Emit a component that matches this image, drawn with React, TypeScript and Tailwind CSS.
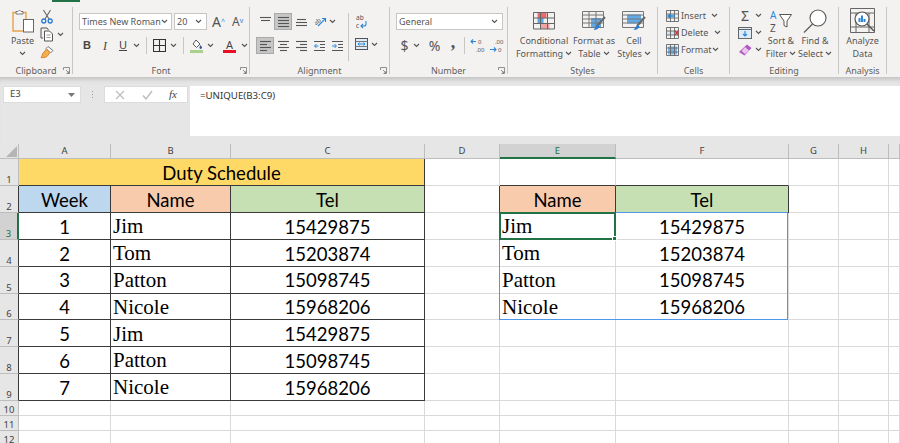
import type { ReactNode } from "react";

const Chev = ({ className = "" }: { className?: string }) => (
  <svg width="7" height="5" viewBox="0 0 7 5" className={`shrink-0 ${className}`} fill="none" stroke="#555" strokeWidth="1.1">
    <path d="M1 1l2.5 2.5L6 1" />
  </svg>
);

const Launcher = () => (
  <svg width="7" height="7" viewBox="0 0 7 7" className="absolute right-[2px] top-[1px]" fill="none" stroke="#777" strokeWidth="0.8">
    <path d="M.5 3V.5h6v6H3.500M3 3l3 3M4 6h2V4" />
  </svg>
);

function Group({ label, width, launcher, children }: { label: string; width: string; launcher?: boolean; children: ReactNode }) {
  return (
    <section className={`flex h-[67px] shrink-0 flex-col border-r border-[#c8c6c4] ${width}`}>
      <div className="h-[59px]">{children}</div>
      <div className="relative h-[8px] text-center text-[9px] leading-[10px] text-[#605e5c]">
        {label}
        {launcher && <Launcher />}
      </div>
    </section>
  );
}

// horizontal-lines icon used by the alignment buttons
const Lines = ({ rows }: { rows: [number, number][] }) => (
  <svg width="13" height="12" viewBox="0 0 13 12" stroke="#555" strokeWidth="1.1">
    {rows.map(([a, b], i) => (
      <path key={i} d={`M${a} ${1.5 + i * 3}H${b}`} />
    ))}
  </svg>
);

const Indent = ({ flip }: { flip?: boolean }) => (
  <svg width="13" height="12" viewBox="0 0 13 12" fill="none">
    <path d="M1 1.5h11M7 4.5h5M7 7.5h5M1 10.5h11" stroke="#555" />
    <path d={flip ? "M1 6h4M3.5 4l2 2-2 2" : "M5.5 6h-4M3.5 4l-2 2 2 2"} stroke="#2b88d8" />
  </svg>
);

const Btn = ({ on, children }: { on?: boolean; children: ReactNode }) => (
  <div className={`flex h-[17px] w-[18px] items-center justify-center ${on ? "border border-[#a9a9a9] bg-[#c6c6c6]" : ""}`}>{children}</div>
);

const Paste = () => (
  <svg width="24" height="24" viewBox="0 0 24 24" fill="none">
    <path d="M5 3.5H2V22h11" stroke="#e8a24c" strokeWidth="1.4" />
    <path d="M12 3.5h3V10" stroke="#e8a24c" strokeWidth="1.4" />
    <path d="M5 5V2.5h2L8.5 1 10 2.5h2V5z" stroke="#777" fill="#fff" />
    <rect x="12.5" y="10.5" width="10" height="12.5" fill="#fff" stroke="#666" />
  </svg>
);

const Scissors = () => (
  <svg width="14" height="15" viewBox="0 0 14 15" fill="none">
    <path d="M3.5 1l5.500 9M10.500 1L5 10" stroke="#666" strokeWidth="1.1" />
    <circle cx="3.8" cy="12" r="2" stroke="#2b7cd3" strokeWidth="1.3" />
    <circle cx="10.2" cy="12" r="2" stroke="#2b7cd3" strokeWidth="1.3" />
  </svg>
);

const Copy = () => (
  <svg width="14" height="15" viewBox="0 0 14 15" fill="none" stroke="#555">
    <path d="M3 11H1V1h6l1.500 2" />
    <path d="M4.500 4h5l3 3v7h-8z" fill="#fff" />
    <path d="M6.500 8h4M6.500 10.500h4" stroke="#999" />
  </svg>
);

const Brush = () => (
  <svg width="15" height="14" viewBox="0 0 15 14" fill="none">
    <path d="M8 1.500l5 4-2.500 2.500-4.500-4.500z" fill="#fff" stroke="#777" />
    <path d="M6.500 4L10 7.500 7 11.500c-2 1-4 1.500-6 1 1-1 1-2 1.500-3.500z" fill="#f2b04e" stroke="#d9822b" />
  </svg>
);

const Borders = () => (
  <svg width="13" height="13" viewBox="0 0 13 13" fill="none" stroke="#333" strokeWidth="1.1">
    <path d="M.5.500h12v12H.5zM6.500.500v12M.5 6.500h12" />
  </svg>
);

const FillColor = () => (
  <svg width="13" height="14" viewBox="0 0 13 14">
    <path d="M6 1l4 4-3.500 3.500L3 5z" fill="#fff" stroke="#555" />
    <path d="M10.500 6c1 1.400 1.500 2 1.500 2.600a1.300 1.300 0 01-2.600 0c0-.6.500-1.200 1.100-2.600z" fill="#2b579a" />
    <rect x="0" y="11" width="13" height="3" fill="#a9d18e" />
  </svg>
);

const Orient = () => (
  <svg width="15" height="14" viewBox="0 0 15 14" fill="none">
    <text x="2" y="9" fontSize="6" fill="#555" transform="rotate(-40 5 7)">ab</text>
    <path d="M6 11L13 4M10 3.500h3.500V7" stroke="#2b88d8" strokeWidth="1.1" />
  </svg>
);

const Wrap = () => (
  <svg width="13" height="16" viewBox="0 0 13 16" fill="none">
    <text x="1" y="6" fontSize="6.500" fill="#555">ab</text>
    <text x="1" y="14" fontSize="6.500" fill="#555">c</text>
    <path d="M11 7v3a2 2 0 01-2 2H6M8 10l-2 2 2 2" stroke="#2b88d8" strokeWidth="1.1" />
  </svg>
);

const Merge = () => (
  <svg width="13" height="12" viewBox="0 0 13 12" fill="none">
    <rect x=".5" y=".5" width="12" height="11" stroke="#555" fill="#deecf9" />
    <path d="M.5 3.500h12M.5 8.500h12" stroke="#777" />
    <path d="M3 6h7M4.500 4.500L3 6l1.500 1.500M8.500 4.500L10 6 8.500 7.500" stroke="#2b88d8" />
  </svg>
);

const Decimal = ({ more }: { more?: boolean }) => (
  <svg width="15" height="15" viewBox="0 0 15 15" fill="none">
    <text x={more ? 8 : 6} y="6" fontSize="6" fill="#555">{more ? "0" : ".00"}</text>
    <text x={more ? 6 : 9} y="14" fontSize="6" fill="#555">{more ? ".00" : "0"}</text>
    <path d={more ? "M6 3.500H1M3 1.500l-2 2 2 2" : "M1 11.500h6M5 9.500l2 2-2 2"} stroke="#2b88d8" strokeWidth="1.1" />
  </svg>
);

const CondFormat = () => (
  <svg width="22" height="18" viewBox="0 0 22 18" fill="none">
    <rect x="4.500" y=".5" width="9" height="5.500" fill="#ef6a6a" />
    <rect x="4.500" y="6" width="6" height="5.500" fill="#5ea6e6" />
    <rect x="7.500" y="11.500" width="9" height="5.500" fill="#f4a3a3" />
    <path d="M.5.500h21v16.500H.5zM.5 6h21M.5 11.500h21M7.500.500v16.500M14.500.500v16.500" stroke="#666" />
  </svg>
);

const TableBrush = ({ cell }: { cell?: boolean }) => (
  <svg width="24" height="20" viewBox="0 0 24 20" fill="none">
    {cell ? <rect x="5" y="3.500" width="14" height="9" fill="#62a9e8" /> : <rect x="9" y="7" width="10" height="9" fill="#62a9e8" />}
    <path d="M.5.500h21v16H.5zM.5 4h21M.5 8h21M.5 12h21" stroke="#777" />
    {!cell && <path d="M7 .5v16M14 .5v16" stroke="#777" />}
    <path d="M23 6l-8 9" stroke="#666" strokeWidth="2" />
    <path d="M15.500 13.500l2 2c-1 2.500-3 3.500-6 3.500 1.500-1.500 2-3 4-5.500z" fill="#2b7cd3" />
  </svg>
);

const CellIcon = ({ kind }: { kind: "insert" | "delete" | "format" }) => (
  <svg width="13" height="12" viewBox="0 0 13 12" fill="none" className="shrink-0">
    {kind === "format" ? <rect x="2" y="2.500" width="9" height="8" fill="#7db7ea" /> : <rect x="1" y="4" width="8" height="4" fill="#cfe4f7" />}
    <path d="M.5.500h12v11H.5zM.5 4h12M.5 8h12M4.500.500v11M8.500.500v11" stroke="#666" strokeWidth=".9" />
    {kind === "insert" && <path d="M9 6H2M4.500 4L2 6l2.500 2" stroke="#2b88d8" strokeWidth="1.3" />}
    {kind === "delete" && <path d="M9 4l3.500 4M12.500 4L9 8" stroke="#d13438" strokeWidth="1.3" />}
  </svg>
);

const SortFilter = () => (
  <svg width="24" height="26" viewBox="0 0 24 26" fill="none" className="-mb-[2px]">
    <text x="1" y="10" fontSize="10" fill="#2b88d8">A</text>
    <text x="1" y="22.500" fontSize="10" fill="#555">Z</text>
    <path d="M10.500 5.500h12l-4.500 6.500v6l-3-1.500V12z" stroke="#555" fill="#fff" />
  </svg>
);

const Magnifier = () => (
  <svg width="24" height="24" viewBox="0 0 24 24" fill="none" stroke="#555" strokeWidth="1.1">
    <circle cx="15" cy="9" r="8" fill="#fff" />
    <path d="M9.500 15L1 23.500" />
  </svg>
);

const Analyze = () => (
  <svg width="25" height="25" viewBox="0 0 25 25" fill="none">
    <path d="M.5.500h24v24H.5zM.5 5h24M.5 19h24M6 5v19M19 5v19" stroke="#666" />
    <circle cx="12" cy="11" r="7" fill="#fff" stroke="#555" strokeWidth="1.2" />
    <path d="M8.500 14V10h2v4zM11 14V7.500h2V14zM13.500 14v-3h2v3z" fill="#2b88d8" />
    <path d="M17 16l7 7" stroke="#555" strokeWidth="1.5" />
  </svg>
);

const Ribbon = () => (
  <header className="flex h-[77px] bg-[#f3f2f1] pt-[7px] text-[#555]">
    <Group label="Clipboard" width="w-[73px]" launcher>
      <div className="flex pl-[10px] pt-[2px]">
        <div className="flex w-[25px] flex-col items-center">
          <Paste />
          <span className="mt-[2px] text-[9px] leading-[12px]">Paste</span>
          <Chev className="mt-[4px]" />
        </div>
        <div className="ml-[5px] flex flex-col gap-[3px]">
          <Scissors />
          <div className="flex items-center gap-[3px]"><Copy /><Chev /></div>
          <Brush />
        </div>
      </div>
    </Group>

    <Group label="Font" width="w-[177px]" launcher>
      <div className="flex items-center pl-[6px] pt-[6px]">
        <div className="flex h-[17px] w-[93px] items-center justify-between whitespace-nowrap border border-[#c8c6c4] bg-white pl-[2px] pr-[4px] text-[9px]">Times New Roman<Chev /></div>
        <div className="ml-[2px] flex h-[17px] w-[33px] items-center justify-between border border-[#c8c6c4] bg-white pl-[2px] pr-[4px] text-[9px]">20<Chev /></div>
        <span className="ml-[5px] w-[15px] whitespace-nowrap text-[14px] leading-[17px]">A<sup className="text-[7px] text-[#2b88d8]">^</sup></span>
        <span className="ml-[5px] w-[13px] whitespace-nowrap text-[12px] leading-[17px]">A<sup className="text-[7px] text-[#2b88d8]">v</sup></span>
      </div>
      <div className="mt-[7px] flex h-[17px] items-center pl-[5px] text-[#444]">
        <span className="w-[18px] text-center font-['Liberation_Sans',sans-serif] text-[11px] font-bold">B</span>
        <span className="w-[18px] text-center font-['Liberation_Serif',serif] text-[12px] italic">I</span>
        <span className="w-[18px] text-center text-[11px] underline">U</span>
        <Chev className="ml-[1px]" />
        <div className="mx-[6px] h-[17px] w-px bg-[#c8c6c4]" />
        <Borders />
        <Chev className="ml-[4px]" />
        <div className="mx-[6px] h-[17px] w-px bg-[#c8c6c4]" />
        <FillColor />
        <Chev className="ml-[4px]" />
        <div className="ml-[9px] flex w-[13px] flex-col items-center">
          <span className="text-[11px] leading-[11px]">A</span>
          <div className="h-[3px] w-[13px] bg-[#e81123]" />
        </div>
        <Chev className="ml-[5px]" />
      </div>
    </Group>

    <Group label="Alignment" width="w-[140px]" launcher>
      <div className="flex">
        <div>
          <div className="flex items-center pl-[6px] pt-[6px]">
            <Btn><Lines rows={[[1, 12], [2, 11]]} /></Btn>
            <Btn on><Lines rows={[[1, 12], [1, 12], [1, 12], [1, 12]]} /></Btn>
            <Btn><div className="pt-[4px]"><Lines rows={[[2, 11], [1, 12], [1, 12]]} /></div></Btn>
            <Btn><Orient /></Btn>
            <Chev className="ml-[1px]" />
          </div>
          <div className="mt-[7px] flex items-center pl-[6px]">
            <Btn on><Lines rows={[[1, 12], [1, 8], [1, 12], [1, 8]]} /></Btn>
            <Btn><Lines rows={[[1, 12], [3, 10], [1, 12], [3, 10]]} /></Btn>
            <Btn><Lines rows={[[1, 12], [5, 12], [1, 12], [5, 12]]} /></Btn>
            <Btn><Indent /></Btn>
            <Btn><Indent flip /></Btn>
          </div>
        </div>
        <div className="ml-[2px] mt-[6px] h-[48px] w-px bg-[#c8c6c4]" />
        <div className="ml-[6px] pt-[7px]">
          <Wrap />
          <div className="mt-[8px] flex items-center gap-[3px]"><Merge /><Chev /></div>
        </div>
      </div>
    </Group>

    <Group label="Number" width="w-[118px]" launcher>
      <div className="pl-[6px] pt-[6px]">
        <div className="flex h-[17px] w-[107px] items-center justify-between border border-[#c8c6c4] bg-white pl-[2px] pr-[4px] text-[9px]">General<Chev /></div>
      </div>
      <div className="mt-[7px] flex h-[17px] items-center pl-[10px]">
        <span className="w-[9px] text-center text-[14px] leading-[17px]">$</span>
        <Chev className="ml-[4px]" />
        <span className="ml-[7px] w-[15px] text-center text-[14px] leading-[17px]">%</span>
        <span className="ml-[7px] h-[17px] w-[8px] text-center font-['Liberation_Serif',serif] text-[18px] font-bold leading-[10px]">,</span>
        <div className="ml-[7px] h-[17px] w-px bg-[#c8c6c4]" />
        <div className="ml-[5px]"><Decimal more /></div>
        <div className="ml-[4px]"><Decimal /></div>
      </div>
    </Group>

    <Group label="Styles" width="w-[150px]">
      <div className="flex pl-[6px] pt-[5px] text-center text-[9px] leading-[13px]">
        <div className="flex w-[60px] flex-col items-center">
          <div className="flex h-[18px] items-center"><CondFormat /></div>
          <span className="mt-[4px]">Conditional</span>
          <span className="flex items-center gap-[2px]">Formatting <Chev /></span>
        </div>
        <div className="flex w-[40px] flex-col items-center">
          <div className="flex h-[18px] items-center"><TableBrush /></div>
          <span className="mt-[4px] whitespace-nowrap">Format as</span>
          <span className="flex items-center gap-[2px]">Table <Chev /></span>
        </div>
        <div className="flex w-[40px] flex-col items-center">
          <div className="flex h-[18px] items-center"><TableBrush cell /></div>
          <span className="mt-[4px]">Cell</span>
          <span className="flex items-center gap-[2px]">Styles <Chev /></span>
        </div>
      </div>
    </Group>

    <Group label="Cells" width="w-[72px]">
      <div className="flex flex-col pl-[8px] text-[9px]">
        <div className="flex h-[17px] items-center"><CellIcon kind="insert" /><span className="ml-[2px] w-[30px]">Insert</span><Chev /></div>
        <div className="flex h-[17px] items-center"><CellIcon kind="delete" /><span className="ml-[2px] w-[33px]">Delete</span><Chev /></div>
        <div className="flex h-[17px] items-center"><CellIcon kind="format" /><span className="ml-[2px] w-[31px]">Format</span><Chev /></div>
      </div>
    </Group>

    <Group label="Editing" width="w-[109px]">
      <div className="flex">
        <div className="flex w-[34px] flex-col pl-[8px]">
          <div className="flex h-[17px] items-center gap-[3px]"><span className="w-[14px] text-center text-[14px] leading-[17px]">Σ</span><Chev /></div>
          <div className="flex h-[17px] items-center gap-[3px]">
            <svg width="14" height="12" viewBox="0 0 14 12" fill="none"><rect x=".5" y=".5" width="13" height="11" fill="#deecf9" stroke="#666" /><path d="M.5 2.500h13" stroke="#666" /><path d="M7 4v5M5 7l2 2 2-2" stroke="#2b88d8" strokeWidth="1.2" /></svg>
            <Chev />
          </div>
          <div className="flex h-[17px] items-center gap-[3px]">
            <svg width="14" height="12" viewBox="0 0 14 12"><path d="M9 .5l4.500 3.500-7 7.500L1 8z" fill="#b455c6" /><path d="M7 3l4 3.500-4 3.500L3.500 7z" fill="#e9c6ef" /></svg>
            <Chev />
          </div>
        </div>
        <div className="flex w-[34px] flex-col items-center pt-[2px] text-[9px] leading-[13px]">
          <SortFilter />
          <span className="mt-px whitespace-nowrap">Sort &amp;</span>
          <span className="flex items-center gap-[2px]">Filter <Chev /></span>
        </div>
        <div className="flex w-[34px] flex-col items-center pt-[2px] text-[9px] leading-[13px]">
          <Magnifier />
          <span className="mt-px whitespace-nowrap">Find &amp;</span>
          <span className="flex items-center gap-[2px]">Select <Chev /></span>
        </div>
      </div>
    </Group>

    <Group label="Analysis" width="w-[48px]">
      <div className="flex flex-col items-center pt-px text-center text-[9px] leading-[13px]">
        <Analyze />
        <span className="mt-px">Analyze</span>
        <span>Data</span>
      </div>
    </Group>
  </header>
);

const FormulaBar = () => (
  <div className="flex h-[67px] bg-[#e6e6e6] shadow-[inset_0_6px_5px_-4px_#bdbdbd]">
    <div className="flex pt-[9px]">
      <div className="ml-[3px] flex h-[17px] w-[78px] items-center justify-between border border-[#dcdcdc] bg-white pl-[6px] pr-[5px] text-[9.5px] text-[#444]">
        E3
        <svg width="7" height="4" viewBox="0 0 7 4"><path d="M0 0h7L3.500 4z" fill="#777" /></svg>
      </div>
      <div className="ml-[10px] flex h-[17px] w-[3px] flex-col items-center justify-center gap-[2px]">
        <i className="size-px bg-[#999]" /><i className="size-px bg-[#999]" /><i className="size-px bg-[#999]" />
      </div>
      <div className="ml-[10px] flex h-[17px] w-[84px] items-center border border-[#dcdcdc] bg-white">
        <svg width="10" height="10" viewBox="0 0 10 10" className="ml-[10px]" fill="none" stroke="#bdbdbd" strokeWidth="1.2"><path d="M1 1l8 8M9 1L1 9" /></svg>
        <svg width="11" height="10" viewBox="0 0 11 10" className="ml-[17px]" fill="none" stroke="#bdbdbd" strokeWidth="1.4"><path d="M1 5.500L4 9l6-8" /></svg>
        <span className="ml-[16px] font-['Liberation_Serif',serif] text-[11px] italic text-[#444]">fx</span>
      </div>
    </div>
    <div className="ml-[2px] mt-[9px] h-[50px] flex-1 bg-white pl-[10px] pt-[1px] text-[9.7px] leading-[17px] text-[#333]">=UNIQUE(B3:C9)</div>
  </div>
);

const sans = "font-['Lato',sans-serif] text-[18.5px] text-black pt-[3px]";
const serif = "font-['Liberation_Serif',serif] text-[21px] text-black pl-[2px] pt-[2px]";
const thin = "border-b border-r border-[#d9d9d9]";
const dark = "border-b border-r border-[#3a3a3a]";
const centre = "flex items-center justify-center";
const left = "flex items-center";

const schedule = [
  ["1", "Jim", "15429875"],
  ["2", "Tom", "15203874"],
  ["3", "Patton", "15098745"],
  ["4", "Nicole", "15968206"],
  ["5", "Jim", "15429875"],
  ["6", "Patton", "15098745"],
  ["7", "Nicole", "15968206"],
];
const unique = schedule.slice(0, 4);
const columns = ["A", "B", "C", "D", "E", "F", "G", "H", ""];

const Empty = ({ className = thin }: { className?: string }) => <div className={className} />;

const RowHead = ({ n, on, edge }: { n: number; on?: boolean; edge?: boolean }) => (
  <div className={`flex items-end justify-center border-b border-[#bdbdbd] text-[9.5px] leading-[11px] ${on ? "border-r-2 border-r-[#217346] bg-[#d2d2d2] text-[#217346]" : `border-r bg-[#e6e6e6] text-[#444] ${edge ? "border-r-[#3a3a3a]" : "border-r-[#bdbdbd]"}`}`}>
    {n}
  </div>
);

const Sheet = () => (
  <div className="grid grid-cols-[19px_92px_120px_194px_75px_116px_173px_50px_50px_11px] grid-rows-[15px_27.4px_26.8px_26.8px_26.8px_26.8px_26.8px_26.8px_26.8px_26.8px_15px_15px_15px] font-['Noto_Sans',sans-serif]">
    <div className="flex items-end justify-end border-b border-r border-[#bdbdbd] bg-[#e6e6e6] p-[1px]">
      <div className="size-0 border-b-[11px] border-l-[11px] border-b-[#b5b5b5] border-l-transparent" />
    </div>
    {columns.map((c) => (
      <div
        key={c}
        className={`flex items-center justify-center pt-px text-[9.5px] ${c === "E" ? "border-b-2 border-r border-b-[#217346] border-r-[#bdbdbd] bg-[#d2d2d2] text-[#217346]" : "border-b border-r border-[#bdbdbd] bg-[#e6e6e6] text-[#444]"}`}
      >
        {c}
      </div>
    ))}

    <RowHead n={1} />
    <div className={`col-span-3 bg-[#ffd966] ${dark} ${centre} ${sans}`}>Duty Schedule</div>
    <Empty />
    <Empty className="border-b border-r border-b-[#3a3a3a] border-r-[#d9d9d9]" />
    <Empty className="border-b border-r border-b-[#3a3a3a] border-r-[#d9d9d9]" />
    <Empty /><Empty /><Empty />

    <RowHead n={2} edge />
    <div className={`bg-[#bdd7ee] ${dark} ${centre} ${sans}`}>Week</div>
    <div className={`bg-[#f8cbad] ${dark} ${centre} ${sans}`}>Name</div>
    <div className={`bg-[#c6e0b4] ${dark} ${centre} ${sans}`}>Tel</div>
    <Empty className="border-b border-r border-b-[#d9d9d9] border-r-[#3a3a3a]" />
    <div className={`bg-[#f8cbad] ${dark} ${centre} ${sans}`}>Name</div>
    <div className={`bg-[#c6e0b4] ${dark} ${centre} ${sans}`}>Tel</div>
    <Empty /><Empty /><Empty />

    {schedule.map(([week, name, tel], i) => (
      <div key={week} className="contents">
        <RowHead n={i + 3} on={i === 0} edge />
        <div className={`${dark} ${centre} ${sans}`}>{week}</div>
        <div className={`${dark} ${left} ${serif}`}>{name}</div>
        <div className={`${dark} ${centre} ${sans}`}>{tel}</div>
        <Empty />
        {unique[i] ? (
          <>
            <div className={`relative ${thin} ${left} ${serif}`}>
              {i === 0 && (
                <>
                  <div className="absolute -left-px -top-px z-10 h-[108px] w-[289px] border border-[#4f97ea]" />
                  <div className="absolute -left-px -top-px z-20 h-[28px] w-[117px] border-2 border-[#217346]">
                    <div className="absolute -bottom-[3px] -right-[3px] size-[5px] border border-white bg-[#217346]" />
                  </div>
                </>
              )}
              {unique[i][1]}
            </div>
            <div className={`${thin} ${centre} ${sans}`}>{unique[i][2]}</div>
          </>
        ) : (
          <><Empty /><Empty /></>
        )}
        <Empty /><Empty /><Empty />
      </div>
    ))}

    {[10, 11, 12].map((n) => (
      <div key={n} className="contents">
        <RowHead n={n} />
        {columns.map((c) => <Empty key={c} />)}
      </div>
    ))}
  </div>
);

export default function App() {
  return (
    <div className="h-[443px] w-[900px] overflow-hidden bg-white font-['Noto_Sans',sans-serif]">
      <div className="relative">
        <div className="absolute left-[52px] top-0 z-10 h-[2px] w-[28px] bg-[#217346]" />
        <Ribbon />
      </div>
      <FormulaBar />
      <Sheet />
    </div>
  );
}
